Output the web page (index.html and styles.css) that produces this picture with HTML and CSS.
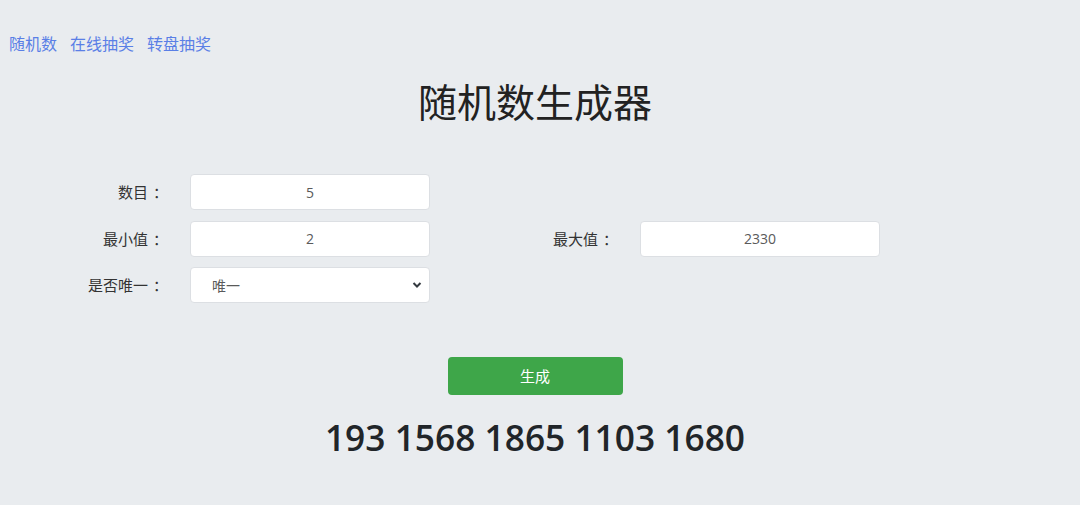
FILE: index.html
```html
<!DOCTYPE html>
<html lang="zh">
<head>
<meta charset="utf-8">
<title>随机数生成器</title>
<link rel="stylesheet" href="styles.css">
</head>
<body>
<nav class="nav">
  <a class="nav-link" href="#">随机数</a>
  <a class="nav-link" href="#">在线抽奖</a>
  <a class="nav-link" href="#">转盘抽奖</a>
</nav>
<main class="main">
  <h1 class="title">随机数生成器</h1>
  <form class="form">
    <label class="label">数目<span class="colon">：</span></label>
    <input class="field" type="text" value="5">
    <span></span><span></span>
    <label class="label">最小值<span class="colon">：</span></label>
    <input class="field" type="text" value="2">
    <label class="label">最大值<span class="colon">：</span></label>
    <input class="field" type="text" value="2330">
    <label class="label">是否唯一<span class="colon">：</span></label>
    <div class="select-wrap">
      <select class="select">
        <option>唯一</option>
        <option>不唯一</option>
      </select>
      <svg class="chevron" width="10" height="8" viewBox="0 0 10 8"><path d="M1.5 2 L5 5.5 L8.5 2" fill="none" stroke="#343a40" stroke-width="2"/></svg>
    </div>
  </form>
  <div class="actions">
    <button class="btn" type="button">生成</button>
  </div>
  <div class="result">193 1568 1865 1103 1680</div>
</main>
</body>
</html>
```
FILE: styles.css
```css
html, body {
  margin: 0;
  padding: 0;
}
body {
  background: #e9ecef;
  font-family: "Open Sans", "Noto Sans CJK SC", sans-serif;
  color: #212529;
  width: 1070px;
}
.nav {
  display: flex;
  gap: 13px;
  padding: 31px 0 0 9px;
  height: 24px;
}
.nav-link {
  font-family: "Noto Sans CJK SC", sans-serif;
  font-size: 16px;
  line-height: 24px;
  color: #5a7fe6;
  text-decoration: none;
}
.main {
  width: 1070px;
}
.title {
  margin: 21px 0 0;
  text-align: center;
  font-family: "Noto Sans CJK SC", sans-serif;
  font-weight: 400;
  font-size: 39px;
  line-height: 48px;
  color: #222;
}
.form {
  margin-top: 50px;
  display: grid;
  grid-template-columns: 163px 240px 156px 240px;
  grid-auto-rows: 36px;
  column-gap: 27px;
  row-gap: 10.5px;
}
.label {
  font-family: "Noto Sans CJK SC", sans-serif;
  font-size: 15px;
  line-height: 36px;
  text-align: right;
  color: #333;
  white-space: nowrap;
}
.colon {
  position: relative;
  left: 5px;
}
.field, .select {
  box-sizing: border-box;
  width: 240px;
  height: 36px;
  background: #fff;
  border: 1px solid #dcdfe3;
  border-radius: 4px;
  font-family: "Open Sans", "Noto Sans CJK SC", sans-serif;
  font-size: 14px;
  color: #5a5a5a;
  outline: none;
}
.field {
  text-align: center;
  padding: 0 10px;
}
.select-wrap {
  position: relative;
  width: 240px;
  height: 36px;
}
.select {
  appearance: none;
  -webkit-appearance: none;
  padding: 0 0 0 21px;
  font-family: "Noto Sans CJK SC", sans-serif;
}
.chevron {
  position: absolute;
  right: 8px;
  top: 14px;
}
.actions {
  margin-top: 53.5px;
  display: flex;
  justify-content: center;
}
.btn {
  width: 175px;
  height: 38px;
  background: #3ea649;
  border: none;
  border-radius: 4px;
  color: #fff;
  font-family: "Noto Sans CJK SC", sans-serif;
  font-size: 15px;
}
.result {
  margin-top: 20px;
  text-align: center;
  font-family: "Open Sans", sans-serif;
  font-weight: 600;
  font-size: 35.3px;
  line-height: 44px;
  color: #212529;
}
```
